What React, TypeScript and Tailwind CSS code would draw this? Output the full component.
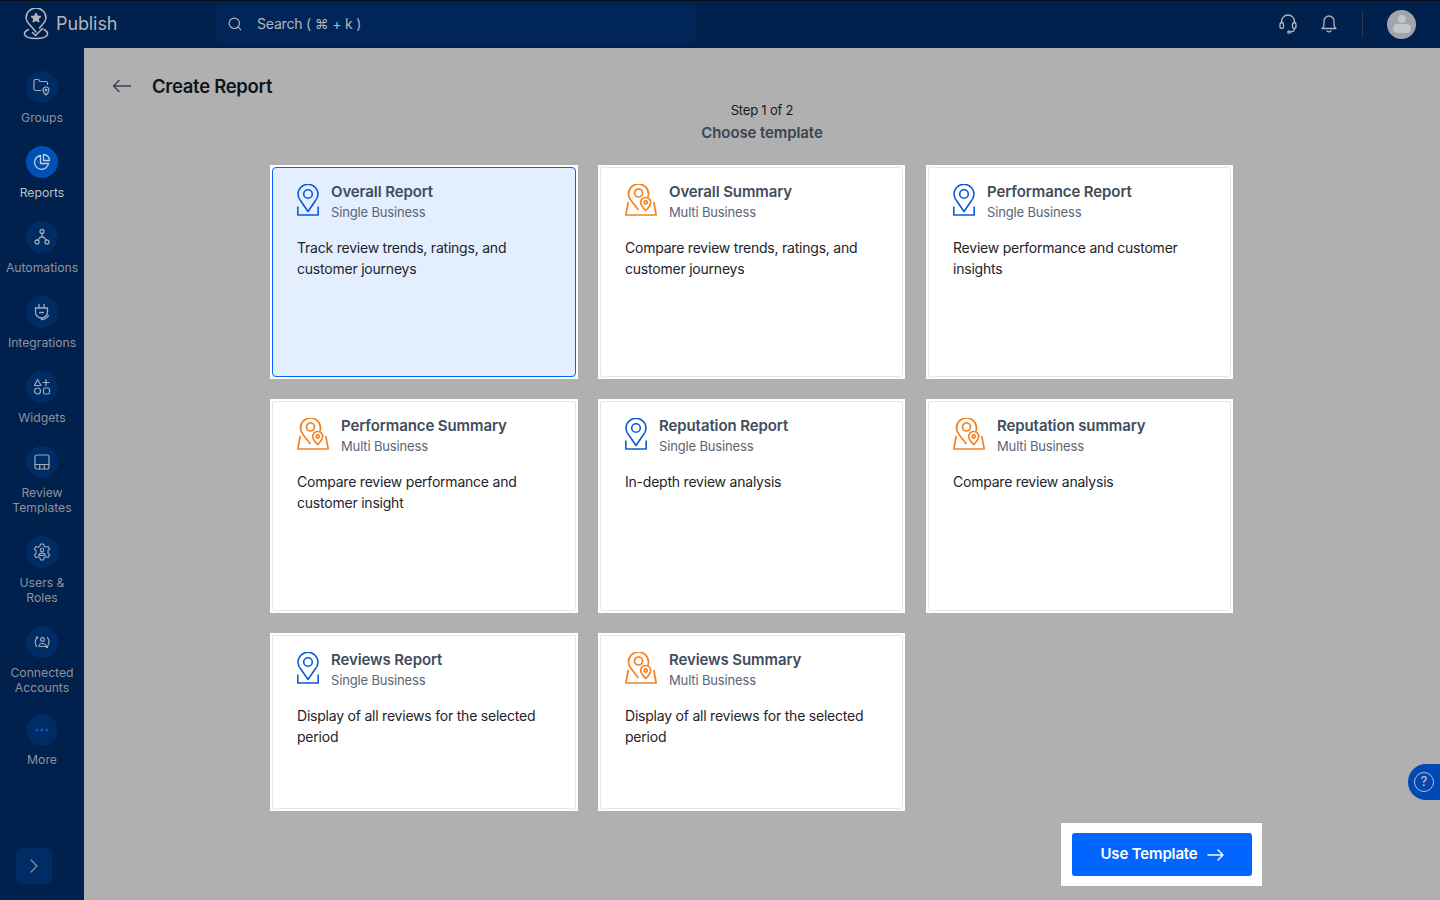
import React from "react";

const stroke = { fill: "none", stroke: "currentColor", strokeWidth: 1.4, strokeLinecap: "round", strokeLinejoin: "round" } as const;

const GroupsIcon = () => (
  <svg width="20" height="20" viewBox="0 0 20 20" {...stroke} strokeWidth={1.2}>
    <path d="M9 13.500H3.500A1.500 1.500 0 0 1 2 12V4a1.500 1.500 0 0 1 1.500-1.500h3l1.500 2h6A1.500 1.500 0 0 1 15.500 6v1.500" />
    <path d="M14 18s-3-2.800-3-5a3 3 0 0 1 6 0c0 2.200-3 5-3 5z" />
    <circle cx="14" cy="13" r="1" />
  </svg>
);
const ReportsIcon = () => (
  <svg width="18" height="18" viewBox="0 0 18 18" {...stroke} strokeWidth={1.3}>
    <path d="M7.500 2.500A7 7 0 1 0 15.500 10.500H7.500z" />
    <path d="M10.500 1.500a6 6 0 0 1 6 6h-6z" />
  </svg>
);
const AutomationIcon = () => (
  <svg width="16" height="18" viewBox="0 0 16 18" {...stroke} strokeWidth={1.3}>
    <circle cx="8" cy="3.500" r="2" />
    <circle cx="3" cy="14" r="2" />
    <circle cx="13" cy="14" r="2" />
    <path d="M8 5.500V9M4 12l1.500-2.200Q6 9 8 9t2.500.8L12 12" />
  </svg>
);
const PlugIcon = () => (
  <svg width="18" height="18" viewBox="0 0 18 18" {...stroke} strokeWidth={1.3}>
    <path d="M6 1.500v3.500M11 1.500v3.500M2.500 5h12v4a6 6 0 0 1-12 0z" />
    <path d="M6.500 9.500h4M8.500 15v1.500q4 .5 7-4" />
  </svg>
);
const WidgetsIcon = () => (
  <svg width="18" height="18" viewBox="0 0 18 18" {...stroke} strokeWidth={1.2}>
    <path d="M4.500 1.500 8 7.500H1.500z" />
    <path d="M13 1.500v6M10 4.500h6" />
    <circle cx="4.500" cy="13" r="3" />
    <rect x="10.500" y="10" width="6" height="6" rx="1.500" />
  </svg>
);
const TemplateIcon = () => (
  <svg width="16" height="16" viewBox="0 0 16 16" {...stroke} strokeWidth={1.2}>
    <rect x="1" y="1" width="14" height="14" rx="2" />
    <path d="M1 10.500h14M5.700 10.500V15M10.300 10.500V15" />
  </svg>
);
const UsersIcon = () => (
  <svg width="18" height="18" viewBox="0 0 18 18" {...stroke} strokeWidth={1.1}>
    <path d="M7.500 1h3l.6 2.200 1.900 1 2.200-.7 1.400 2.500-1.600 1.600v2.800l1.600 1.600-1.400 2.500-2.200-.7-1.900 1-.6 2.200h-3l-.6-2.200-1.900-1-2.200.7L1.400 12l1.600-1.600V7.600L1.400 6l1.400-2.500 2.200.7 1.900-1z" />
    <circle cx="9" cy="7" r="1.700" />
    <path d="M5.800 12.500q0-2.400 3.200-2.400t3.200 2.400z" />
  </svg>
);
const AccountsIcon = () => (
  <svg width="18" height="18" viewBox="0 0 18 18" {...stroke} strokeWidth={1.2}>
    <circle cx="9.500" cy="6.500" r="1.900" />
    <path d="M6 13.500q0-3 3.500-3t3.500 3z" />
    <path d="M3.500 5Q1 9 3.500 13.500M14.500 4.500q3 4.500 0 9" />
    <circle cx="4" cy="4.500" r=".6" />
    <circle cx="14" cy="14" r=".6" />
  </svg>
);
const MoreIcon = () => (
  <svg width="14" height="4" viewBox="0 0 14 4" fill="#0a5cc4">
    <circle cx="2" cy="2" r="1.500" />
    <circle cx="7" cy="2" r="1.500" />
    <circle cx="12" cy="2" r="1.500" />
  </svg>
);

const PinSingle = () => (
  <svg width="22" height="32" viewBox="0 0 22 32" fill="none" stroke="#0a5ad4" strokeWidth="1.600" strokeLinejoin="round" className="mt-[2px] shrink-0">
    <path d="M11 27.500 3.800 17A10 10 0 0 1 1 10.300a10 10 0 0 1 20 0A10 10 0 0 1 18.200 17z" />
    <circle cx="11" cy="10" r="4.300" />
    <path d="M.8 22.500V31h20.400v-8.500" />
  </svg>
);
const PinMulti = () => (
  <svg width="32" height="32" viewBox="0 0 32 32" fill="none" stroke="#f58220" strokeWidth="1.700" strokeLinejoin="round" className="mt-[2px] shrink-0">
    <path d="M13.500 26 6 16.500A10 10 0 0 1 3.500 10a10 10 0 0 1 20 0c0 1-.2 2-.5 3.200" />
    <circle cx="13.500" cy="9" r="4" />
    <path d="M20.700 26.500s-5-4.800-5-8a5 5 0 0 1 10 0c0 3.200-5 8-5 8z" />
    <circle cx="20.700" cy="18.500" r="1.600" />
    <path d="M3.200 18 .8 31h30.400L28.800 18" />
  </svg>
);

const nav = [
  { label: ["Groups"], icon: <GroupsIcon /> },
  { label: ["Reports"], icon: <ReportsIcon />, active: true },
  { label: ["Automations"], icon: <AutomationIcon /> },
  { label: ["Integrations"], icon: <PlugIcon /> },
  { label: ["Widgets"], icon: <WidgetsIcon /> },
  { label: ["Review", "Templates"], icon: <TemplateIcon /> },
  { label: ["Users &", "Roles"], icon: <UsersIcon /> },
  { label: ["Connected", "Accounts"], icon: <AccountsIcon /> },
];

const cards = [
  { title: "Overall Report", sub: "Single Business", text: ["Track review trends, ratings, and", "customer journeys"], selected: true },
  { title: "Overall Summary", sub: "Multi Business", text: ["Compare review trends, ratings, and", "customer journeys"] },
  { title: "Performance Report", sub: "Single Business", text: ["Review performance and customer", "insights"] },
  { title: "Performance Summary", sub: "Multi Business", text: ["Compare review performance and", "customer insight"] },
  { title: "Reputation Report", sub: "Single Business", text: ["In-depth review analysis"] },
  { title: "Reputation summary", sub: "Multi Business", text: ["Compare review analysis"] },
  { title: "Reviews Report", sub: "Single Business", text: ["Display of all reviews for the selected", "period"] },
  { title: "Reviews Summary", sub: "Multi Business", text: ["Display of all reviews for the selected", "period"] },
];

const Card = ({ title, sub, text, selected }: { title: string; sub: string; text: string[]; selected?: boolean }) => (
  <div className="bg-white p-[2px] [&:nth-child(3n)]:ml-px">
    <div
      className={
        selected
          ? "h-full rounded-[4px] border border-[#0066ff] bg-[#e3efff] pl-[24px] pt-[14px]"
          : "h-full rounded-[2px] border border-[#e4e6ea] bg-white pl-[24px] pt-[14px]"
      }
    >
      <div className="flex gap-[12px]">
        {sub.startsWith("Single") ? <PinSingle /> : <PinMulti />}
        <div>
          <div className="text-[15px] leading-[20px] font-semibold tracking-[-0.1px] text-[#414c5c]">{title}</div>
          <div className="mt-[1px] text-[13px] leading-[19px] tracking-[-0.15px] text-[#5b6573]">{sub}</div>
        </div>
      </div>
      <div className="mt-[15px] text-[14px] leading-[21px] tracking-[-0.22px] text-[#1f2329]">
        {text.map((line) => (
          <div key={line}>{line}</div>
        ))}
      </div>
    </div>
  </div>
);

export default function App() {
  return (
    <div className="flex h-[900px] w-[1440px] flex-col overflow-hidden bg-[#b0b0b0] font-['Inter',sans-serif]">
      <header className="flex h-[48px] shrink-0 items-center border-t border-[#0a0f1a] bg-[#00204d] pb-[1px]">
        <div className="flex w-[216px] items-center pl-[23px]">
          <svg width="26" height="32" viewBox="0 0 26 32" fill="none" stroke="#b4b8bf" strokeWidth="1.500" strokeLinecap="round" strokeLinejoin="round">
            <path d="M13 24 6.500 16.500A10.500 10.500 0 0 1 3 10a10 10 0 0 1 20 0 10.500 10.500 0 0 1-3.500 6.500L16.500 20" />
            <path d="m13 5.500 1.300 2.800 3 .3-2.300 2 .7 3-2.700-1.600-2.700 1.600.7-3-2.300-2 3-.3z" fill="#b4b8bf" />
            <path d="M5.500 21.500Q1 23.500 1.500 26.500 3 30.500 13 30.500t11.500-4q.5-3-3.500-5" />
            <path d="m9.500 24.500 3 3 7-7" />
          </svg>
          <span className="ml-[7px] pb-[2px] text-[18px] tracking-[-0.1px] text-[#b2b6bc]">Publish</span>
        </div>
        <div className="flex h-[38px] w-[480px] items-center rounded-[4px] bg-[#002559] pl-[12px] text-[14px] tracking-[-0.2px] text-[#b2b6bc]">
          <svg width="14" height="14" viewBox="0 0 14 14" fill="none" stroke="currentColor" strokeWidth="1.200" strokeLinecap="round">
            <circle cx="6.300" cy="6.300" r="5.200" />
            <path d="m10.200 10.200 2.600 2.600" />
          </svg>
          <span className="ml-[15px] pb-[1px]">Search ( ⌘ + k )</span>
        </div>
        <div className="ml-auto flex items-center pr-[24px] text-[#b2b6bc]">
          <svg width="18" height="20" viewBox="0 0 18 20" fill="none" stroke="currentColor" strokeWidth="1.300" strokeLinecap="round" strokeLinejoin="round">
            <path d="M2.500 9V7.500a6.500 6.500 0 0 1 13 0V9" />
            <rect x="1" y="8.500" width="3.500" height="6" rx="1.700" />
            <rect x="13.500" y="8.500" width="3.500" height="6" rx="1.700" />
            <path d="M15.500 14.500q0 3.300-4 3.500" />
            <circle cx="10" cy="18" r="1.200" />
          </svg>
          <svg className="ml-[23px]" width="18" height="20" viewBox="0 0 18 20" fill="none" stroke="currentColor" strokeWidth="1.300" strokeLinecap="round" strokeLinejoin="round">
            <path d="M2 14.500q2-1.500 2-4V7a5 5 0 0 1 10 0v3.500q0 2.500 2 4z" />
            <path d="M7 17q2 1.800 4 0" />
          </svg>
          <div className="ml-[24px] h-[28px] w-px bg-[#2f3a46]" />
          <div className="ml-[24px] flex h-[29px] w-[29px] flex-col items-center justify-center overflow-hidden rounded-full bg-[#a1a5ab]">
            <div className="h-[8px] w-[8px] rounded-full bg-[#c3c5c9]" />
            <div className="mt-[1px] h-[9px] w-[18px] rounded-full bg-[#c3c5c9]" />
          </div>
        </div>
      </header>

      <div className="flex min-h-0 flex-1">
        <aside className="relative flex w-[84px] shrink-0 flex-col items-center bg-[#00204d] pt-[23px]">
          <div className="flex flex-col items-center gap-[21px]">
            {nav.map((item) => (
              <div key={item.label[0]} className="flex flex-col items-center">
                <div
                  className={
                    item.active
                      ? "flex h-[32px] w-[32px] items-center justify-center rounded-full bg-[#0051b5] text-[#c4cede]"
                      : "flex h-[32px] w-[32px] items-center justify-center rounded-full bg-[#002c66] text-[#a3a9b3]"
                  }
                >
                  {item.icon}
                </div>
                <div className={item.active ? "mt-[7px] text-center text-[12.200px] leading-[15px] text-[#bcc0c6]" : "mt-[7px] text-center text-[12.200px] leading-[15px] text-[#8e939b]"}>
                  {item.label.map((line) => (
                    <div key={line}>{line}</div>
                  ))}
                </div>
              </div>
            ))}
            <div className="-mt-[2px] flex flex-col items-center">
              <div className="flex h-[32px] w-[30px] items-center justify-center rounded-full bg-[#002c66]">
                <MoreIcon />
              </div>
              <div className="mt-[6px] text-center text-[12.200px] leading-[15px] text-[#8e939b]">More</div>
            </div>
          </div>
          <div className="absolute bottom-[16px] left-[16px] flex h-[36px] w-[36px] items-center justify-center rounded-[6px] bg-[#002c66]">
            <svg width="10" height="14" viewBox="0 0 10 14" fill="none" stroke="#8e939b" strokeWidth="1.200" strokeLinecap="round">
              <path d="m2 1 6 6-6 6" />
            </svg>
          </div>
        </aside>

        <main className="relative min-w-0 flex-1">
          <div className="flex items-center pl-[28px] pt-[27px]">
            <svg width="20" height="14" viewBox="0 0 20 14" fill="none" stroke="#38434f" strokeWidth="1.500" strokeLinecap="round" strokeLinejoin="round">
              <path d="M18.500 7H1.500M7 1.500 1.500 7 7 12.500" />
            </svg>
            <h1 className="ml-[20px] text-[18.500px] leading-[22px] font-semibold tracking-[-0.3px] text-[#111418]">Create Report</h1>
          </div>
          <div className="mt-[4px] text-center text-[13px] leading-[18px] tracking-[-0.2px] text-[#15181c]">Step 1 of 2</div>
          <div className="mt-[3px] text-center text-[15px] leading-[22px] font-semibold tracking-[-0.1px] text-[#3a4552]">Choose template</div>
          <div className="ml-[186px] mt-[21px] grid w-[963px] grid-cols-[308px_307px_308px] grid-rows-[214px_214px_178px] gap-[20px]">
            {cards.map((c) => (
              <Card key={c.title} {...c} />
            ))}
          </div>
          <div className="ml-[977px] mt-[12px] w-[201px] bg-white pb-[10px] pl-[11px] pt-[10px]">
            <button className="flex h-[43px] w-[180px] items-center justify-center gap-[9px] rounded-[3px] bg-[#0066ff] text-[15px] font-semibold tracking-[-0.15px] text-white">
              Use Template
              <svg width="17" height="12" viewBox="0 0 17 12" fill="none" stroke="currentColor" strokeWidth="1.400" strokeLinecap="round" strokeLinejoin="round">
                <path d="M1 6h15M11 1l5 5-5 5" />
              </svg>
            </button>
          </div>
          <div className="absolute right-0 top-[716px] flex h-[36px] w-[32px] items-center rounded-l-[18px] bg-[#0049b3] pl-[6px]">
            <div className="flex h-[20px] w-[20px] items-center justify-center rounded-full border-[1.500px] border-[#b8c0cc] text-[13px] font-medium text-[#b8c0cc]">?</div>
          </div>
        </main>
      </div>
    </div>
  );
}
